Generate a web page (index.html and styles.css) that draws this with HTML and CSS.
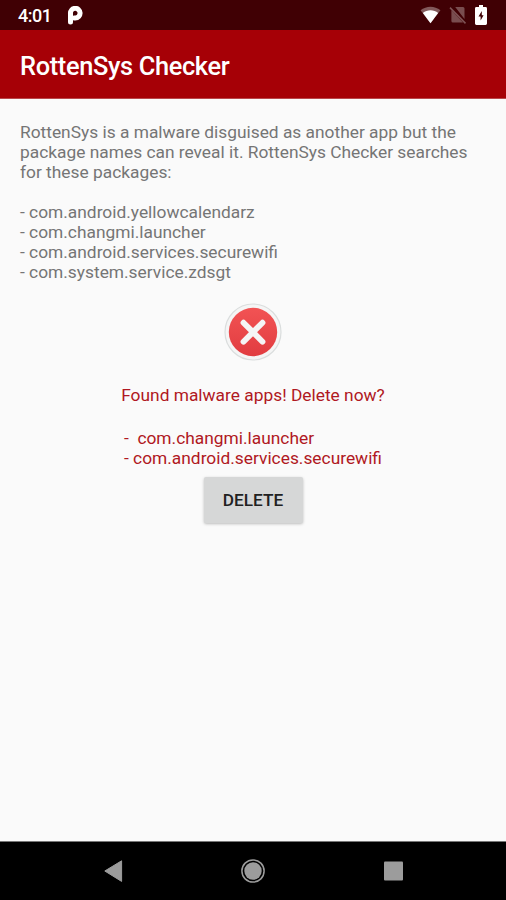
FILE: index.html
```html
<!DOCTYPE html>
<html lang="en">
<head>
    <meta charset="UTF-8" />
    <meta name="viewport" content="width=device-width, initial-scale=1.0" />
    <title>RottenSys Checker</title>
    <link rel="stylesheet" href="styles.css">
</head>
<body>
    <div class="status-bar">
        <span class="clock">4:01</span>
        <svg class="p-icon" width="16" height="19" viewBox="0 0 16 19">
            <path d="M3.5 16V7.6A4.8 4.8 0 1 1 8.3 11.9H7.1" fill="none" stroke="#fff" stroke-width="5" stroke-linecap="round" stroke-linejoin="round" />
        </svg>
        <div class="status-icons">
            <svg width="21" height="18" viewBox="0 0 22 18" preserveAspectRatio="none">
                <path d="M11 17.3L.6 4.3C6.6-.6 15.4-.6 21.4 4.3z" fill="#fff" opacity=".35" />
                <path d="M11 17.3L3 7C7.4 3.4 14.6 3.4 19 7z" fill="#fff" />
            </svg>
            <svg width="18" height="18" viewBox="0 0 18 18">
                <path d="M6.2 1H14a1.5 1.5 0 0 1 1.5 1.5V13zM2.4 4.2L14 16.5H3.9a1.5 1.5 0 0 1-1.5-1.5z" fill="#fff" opacity=".3" />
                <path d="M1 1.6L16.5 17.4" stroke="#fff" stroke-width="1.5" opacity=".32" />
            </svg>
            <svg width="12" height="20" viewBox="0 0 12 20">
                <path d="M4 0h4v2h2.6A1.4 1.4 0 0 1 12 3.4v15.2a1.4 1.4 0 0 1-1.4 1.4H1.4A1.4 1.4 0 0 1 0 18.6V3.4A1.4 1.4 0 0 1 1.4 2H4z" fill="#fff" />
                <path d="M6.8 6L3.5 11.4h2.1v4.2l3-5.4H6.8z" fill="#400004" />
            </svg>
        </div>
    </div>

    <header class="app-bar">
        <h1>RottenSys Checker</h1>
    </header>

    <main class="content">
        <p class="description">RottenSys is a malware disguised as another app but the<br>package names can reveal it. RottenSys Checker searches<br>for these packages:</p>
        <ul class="packages">
            <li>- com.android.yellowcalendarz</li>
            <li>- com.changmi.launcher</li>
            <li>- com.android.services.securewifi</li>
            <li>- com.system.service.zdsgt</li>
        </ul>

        <div class="result">
            <svg class="error-icon" width="60" height="60" viewBox="0 0 60 60">
                <defs>
                    <linearGradient id="red" x1="0" y1="0" x2="0" y2="1">
                        <stop offset="0" stop-color="#f25354" />
                        <stop offset="1" stop-color="#e13c40" />
                    </linearGradient>
                </defs>
                <circle cx="30" cy="30" r="28" fill="#f5f5f5" stroke="#dadddd" stroke-width="1.2" />
                <circle cx="30" cy="30" r="24.2" fill="url(#red)" />
                <path d="M20.5 20.7L39.5 39.7M39.5 20.7L20.5 39.7" stroke="#f5f5f5" stroke-width="5.8" stroke-linecap="round" />
            </svg>
            <p class="warning">Found malware apps! Delete now?</p>
            <ul class="found">
                <li>-&nbsp; com.changmi.launcher</li>
                <li>- com.android.services.securewifi</li>
            </ul>
            <button class="delete-btn" type="button">DELETE</button>
        </div>
    </main>

    <nav class="nav-bar">
        <svg width="24" height="24" viewBox="0 0 24 24">
            <path d="M3.8 12L20.6 1.8v20.6z" fill="#9c9c9c" stroke="#9c9c9c" stroke-linejoin="round" />
        </svg>
        <svg width="24" height="24" viewBox="0 0 24 24">
            <circle cx="12" cy="12" r="11.1" fill="none" stroke="#9c9c9c" stroke-width="1.5" />
            <circle cx="12" cy="12" r="8.7" fill="#9c9c9c" />
        </svg>
        <svg width="24" height="24" viewBox="0 0 24 24">
            <rect x="3" y="2.5" width="19" height="19" rx="1" fill="#9c9c9c" />
        </svg>
    </nav>
</body>
</html>
```

FILE: styles.css
```css
* {
    box-sizing: border-box;
}

body {
    display: flex;
    flex-direction: column;
    height: 900px;
    margin: 0;
    background-color: #fafafa;
    color: #757575;
    font-family: Roboto, "Liberation Sans", sans-serif;
    font-size: 17.35px;
    line-height: 20px;
}

h1, p, ul {
    margin: 0;
    padding: 0;
}

ul {
    list-style: none;
}

.status-bar {
    display: flex;
    align-items: center;
    height: 30px;
    padding: 0 19px 0 18px;
    background-color: #400004;
    color: #fff;
}

.clock {
    width: 49px;
    padding-top: 2px;
    font-size: 18px;
    font-weight: 500;
    letter-spacing: -0.5px;
}

.status-icons {
    display: flex;
    align-items: center;
    gap: 8px;
    margin-left: auto;
}

.app-bar {
    display: flex;
    align-items: center;
    height: 69px;
    padding: 4px 20px 0;
    background-color: #a60006;
    border-bottom: 1px solid #b9474b;
    color: #fff;
}

.app-bar h1 {
    font-size: 25.4px;
    font-weight: 500;
    letter-spacing: -0.35px;
    line-height: 30px;
}

.content {
    flex: 1;
    padding: 23px 20px 0;
}

.packages {
    margin-top: 20px;
}

.result {
    display: flex;
    flex-direction: column;
    align-items: center;
    margin-top: 20px;
}

.warning {
    margin-top: 23px;
    color: #b01822;
}

.found {
    margin: 23px 0 9px;
    color: #b01822;
}

.delete-btn {
    width: 99px;
    height: 46px;
    padding: 0;
    border: 0;
    border-radius: 2px;
    background-color: #d6d7d7;
    box-shadow: 0 1px 3px rgba(0, 0, 0, 0.25);
    color: #212121;
    font-family: inherit;
    font-size: 17.2px;
    font-weight: 500;
}

.nav-bar {
    display: flex;
    justify-content: center;
    align-items: center;
    gap: 116px;
    height: 59px;
    border-top: 1px solid #777;
    background-color: #000;
}
```
